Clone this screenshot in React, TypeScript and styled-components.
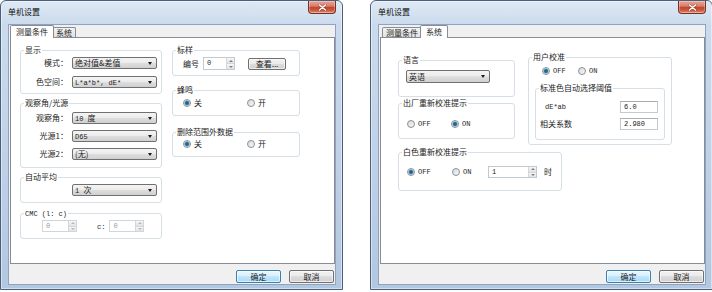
import React from 'react';
import styled, { createGlobalStyle } from 'styled-components';

const GlobalStyle = createGlobalStyle`
  html, body {
    margin: 0;
    padding: 0;
    background: #fff;
  }
  body {
    width: 712px;
    height: 292px;
    overflow: hidden;
    font-family: "Noto Sans CJK SC", "Liberation Sans", sans-serif;
    font-size: 8px;
    color: #1c1c1c;
  }
`;

const Desktop = styled.div`
  display: flex;
  gap: 27px;
  width: 712px;
  height: 292px;
  overflow: hidden;
`;

const Window = styled.div`
  flex: 0 0 343px;
  height: 290px;
  box-sizing: border-box;
  display: flex;
  flex-direction: column;
  padding: 0 6px 4px 7px;
  border: 1px solid #4a5f7c;
  border-radius: 6px 6px 0 0;
  background: linear-gradient(180deg, #dfe9f5 0%, #cbdbed 8%, #bfd1e7 55%, #b2c7e0 100%);
  box-shadow: inset 0 0 0 1px rgba(255, 255, 255, 0.45);
`;

const TitleBar = styled.div`
  flex-shrink: 0;
  height: 23px;
  display: flex;
  justify-content: space-between;
  align-items: flex-start;
`;

const Title = styled.span`
  margin-top: 6px;
  line-height: 10px;
  color: #101010;
`;

const CloseButton = styled.div`
  width: 28px;
  height: 13px;
  box-sizing: border-box;
  display: flex;
  align-items: center;
  justify-content: center;
  border: 1px solid #7a2f25;
  border-top: none;
  border-radius: 0 0 4px 4px;
  background: linear-gradient(180deg, #e8a596 0%, #d97f6b 42%, #c4432b 55%, #cc6244 82%, #e29679 100%);
  box-shadow: inset 0 0 0 1px rgba(255, 255, 255, 0.3);
`;

const Client = styled.div`
  flex: 1;
  display: flex;
  flex-direction: column;
  background: #f0f0f0;
  border: 1px solid #8ea3bf;
  padding-left: 1px;
`;

const TabStrip = styled.div`
  flex-shrink: 0;
  height: 12px;
  display: flex;
  align-items: flex-end;
  padding-left: 2px;
  position: relative;
  z-index: 1;
`;

const Tab = styled.div<{ $active?: boolean }>`
  box-sizing: border-box;
  position: relative;
  z-index: ${(p) => (p.$active ? 2 : 1)};
  height: ${(p) => (p.$active ? 13 : 10)}px;
  margin: 0 ${(p) => (p.$active ? -2 : 0)}px ${(p) => (p.$active ? -1 : 0)}px;
  padding: 0 ${(p) => (p.$active ? 5 : 3)}px;
  border: 1px solid #898c95;
  border-bottom: none;
  border-radius: 2px 2px 0 0;
  background: ${(p) => (p.$active ? '#fff' : 'linear-gradient(180deg, #f3f3f3, #e2e2e2)')};
  line-height: ${(p) => (p.$active ? 11 : 9)}px;
  white-space: nowrap;
`;

const Panel = styled.div<{ $pad: string }>`
  flex: 1;
  box-sizing: border-box;
  background: #fff;
  border: 1px solid #898c95;
  padding: ${(p) => p.$pad};
`;

const ButtonRow = styled.div`
  flex-shrink: 0;
  height: 20px;
  box-sizing: border-box;
  display: flex;
  justify-content: flex-end;
  align-items: flex-start;
  gap: 8px;
  padding: 6px 1px 0 0;
`;

const PushButton = styled.button<{ $primary?: boolean; $w: number; $h?: number }>`
  box-sizing: border-box;
  width: ${(p) => p.$w}px;
  height: ${(p) => p.$h ?? 13}px;
  padding: 0;
  border: 1px solid ${(p) => (p.$primary ? '#3c7fb1' : '#707070')};
  border-radius: 2px;
  background: ${(p) =>
    p.$primary
      ? 'linear-gradient(180deg, #eaf6fd 0%, #d9f0fc 45%, #bee6fd 50%, #a7d9f5 100%)'
      : 'linear-gradient(180deg, #f2f2f2 0%, #ebebeb 45%, #dddddd 50%, #cfcfcf 100%)'};
  box-shadow: inset 0 0 0 1px rgba(255, 255, 255, 0.6);
  font-family: inherit;
  font-size: 8px;
  line-height: 10px;
  color: #1c1c1c;
`;

const ViewButton = styled(PushButton)`
  margin-left: 13px;
`;

const Columns = styled.div<{ $gap: number }>`
  display: flex;
  align-items: flex-start;
  gap: ${(p) => p.$gap}px;
`;

const Column = styled.div<{ $w: number }>`
  width: ${(p) => p.$w}px;
  display: flex;
  flex-direction: column;
`;

const GroupBox = styled.fieldset<{ $w?: number; $mt?: number }>`
  box-sizing: border-box;
  min-width: 0;
  width: ${(p) => (p.$w ? `${p.$w}px` : 'auto')};
  margin: ${(p) => p.$mt ?? 0}px 0 0;
  padding: 0;
  border: 1px solid #d5dfe5;
  border-radius: 3px;
`;

const Legend = styled.legend`
  height: 10px;
  margin-left: 3px;
  padding: 0 1px;
  line-height: 10px;
  white-space: nowrap;
`;

const Latin = styled.span`
  font-family: "Liberation Mono", "DejaVu Sans Mono", monospace;
  font-size: 7px;
  white-space: pre;
`;

const FieldGrid = styled.div<{ $cols: string; $gap: number; $pad: string }>`
  display: grid;
  grid-template-columns: ${(p) => p.$cols};
  column-gap: 4px;
  row-gap: ${(p) => p.$gap}px;
  align-items: center;
  padding: ${(p) => p.$pad};
`;

const FieldLabel = styled.span<{ $left?: boolean; $indent?: number }>`
  text-align: ${(p) => (p.$left ? 'left' : 'right')};
  padding-left: ${(p) => p.$indent ?? 0}px;
  line-height: 12px;
  white-space: nowrap;
`;

const Row = styled.div<{ $pad: string; $h?: number }>`
  display: flex;
  align-items: center;
  height: ${(p) => p.$h ?? 10}px;
  padding: ${(p) => p.$pad};
`;

const ComboBox = styled.div<{ $w?: number; $h?: number }>`
  box-sizing: border-box;
  width: ${(p) => (p.$w ? `${p.$w}px` : 'auto')};
  height: ${(p) => p.$h ?? 12}px;
  display: flex;
  align-items: center;
  padding: 0 4px 0 2px;
  border: 1px solid #707070;
  border-radius: 2px;
  background: linear-gradient(180deg, #f4f4f4 0%, #ececec 45%, #dedede 52%, #d0d0d0 100%);
  line-height: 10px;
  white-space: nowrap;
`;

const ComboArrow = styled.span`
  margin-left: auto;
  width: 0;
  height: 0;
  border-left: 2.5px solid transparent;
  border-right: 2.5px solid transparent;
  border-top: 3px solid #1a1a1a;
`;

const RadioItem = styled.span<{ $w: number }>`
  flex-shrink: 0;
  width: ${(p) => p.$w}px;
  display: flex;
  align-items: center;
  gap: 3px;
  line-height: 10px;
`;

const RadioDot = styled.span<{ $on?: boolean }>`
  box-sizing: border-box;
  width: 8px;
  height: 8px;
  border-radius: 50%;
  border: 1px solid #8c8f93;
  background: ${(p) =>
    p.$on
      ? 'radial-gradient(circle, #1f5476 0, #2f77a3 1.6px, #7fb4d4 2.4px, #e4ecf2 2.8px, #f7f7f7 100%)'
      : 'linear-gradient(135deg, #d9d9d9, #f8f8f8)'};
`;

const SpinBox = styled.div<{ $w: number; $h?: number; $disabled?: boolean }>`
  box-sizing: border-box;
  flex-shrink: 0;
  width: ${(p) => p.$w}px;
  height: ${(p) => p.$h ?? 12}px;
  display: flex;
  border: 1px solid ${(p) => (p.$disabled ? '#d2d6db' : '#c3c9d1')};
  background: #fff;
`;

const SpinValue = styled.span<{ $disabled?: boolean }>`
  flex: 1;
  padding-left: 3px;
  font-family: "Liberation Mono", "DejaVu Sans Mono", monospace;
  font-size: 7px;
  line-height: 10px;
  color: ${(p) => (p.$disabled ? '#9a9a9a' : '#1c1c1c')};
`;

const SpinButtons = styled.div`
  width: 7px;
  display: flex;
  flex-direction: column;
  border-left: 1px solid #d3d7dc;
`;

const SpinButton = styled.span<{ $down?: boolean; $disabled?: boolean }>`
  flex: 1;
  display: flex;
  align-items: center;
  justify-content: center;
  background: linear-gradient(180deg, #f7f7f7, #e3e3e3);
  & + & {
    border-top: 1px solid #d3d7dc;
  }
  &::after {
    content: '';
    border-left: 2px solid transparent;
    border-right: 2px solid transparent;
    ${(p) => (p.$down ? 'border-top' : 'border-bottom')}: 2px solid ${(p) => (p.$disabled ? '#b8b8b8' : '#808080')};
  }
`;

const TextBox = styled.div`
  box-sizing: border-box;
  width: 38px;
  height: 12px;
  padding-left: 3px;
  border: 1px solid #c3c9d1;
  border-top-color: #abadb3;
  background: #fff;
  font-family: "Liberation Mono", "DejaVu Sans Mono", monospace;
  font-size: 7px;
  line-height: 10px;
`;

const Caption = styled.span<{ $ml?: number }>`
  flex-shrink: 0;
  margin-left: ${(p) => p.$ml ?? 0}px;
  line-height: 10px;
  white-space: nowrap;
`;

const NestedArea = styled.div`
  padding: 7px 6px 4px;
`;

const TopSection = styled.div`
  display: flex;
  align-items: flex-start;
  gap: 13px;
`;

function CloseIcon() {
  return (
    <svg width="9" height="7" viewBox="0 0 9 7">
      <path d="M1.5 1 L7.5 6 M7.5 1 L1.5 6" stroke="#3a1410" strokeWidth="2.6" strokeLinecap="round" opacity="0.35" />
      <path d="M1.5 1 L7.5 6 M7.5 1 L1.5 6" stroke="#fff" strokeWidth="1.5" strokeLinecap="round" />
    </svg>
  );
}

interface IComboProps {
  children: React.ReactNode;
  w?: number;
  h?: number;
}

function Combo({ children, w, h }: IComboProps) {
  return (
    <ComboBox $w={w} $h={h}>
      <span>{children}</span>
      <ComboArrow />
    </ComboBox>
  );
}

interface IRadioProps {
  children: React.ReactNode;
  w: number;
  on?: boolean;
}

function Radio({ children, w, on }: IRadioProps) {
  return (
    <RadioItem $w={w}>
      <RadioDot $on={on} />
      {children}
    </RadioItem>
  );
}

interface ISpinProps {
  value: string;
  w: number;
  h?: number;
  disabled?: boolean;
}

function Spin({ value, w, h, disabled }: ISpinProps) {
  return (
    <SpinBox $w={w} $h={h} $disabled={disabled}>
      <SpinValue $disabled={disabled}>{value}</SpinValue>
      <SpinButtons>
        <SpinButton $disabled={disabled} />
        <SpinButton $down $disabled={disabled} />
      </SpinButtons>
    </SpinBox>
  );
}

interface IDialogProps {
  active: number;
  children: React.ReactNode;
}

function Dialog({ active, children }: IDialogProps) {
  return (
    <Window>
      <TitleBar>
        <Title>单机设置</Title>
        <CloseButton>
          <CloseIcon />
        </CloseButton>
      </TitleBar>
      <Client>
        <TabStrip>
          {['测量条件', '系统'].map((t, i) => (
            <Tab key={t} $active={i === active}>
              {t}
            </Tab>
          ))}
        </TabStrip>
        {children}
        <ButtonRow>
          <PushButton $primary $w={45}>
            确定
          </PushButton>
          <PushButton $w={45}>取消</PushButton>
        </ButtonRow>
      </Client>
    </Window>
  );
}

function MeasurePage() {
  return (
    <Panel $pad="7px 0 0 9px">
      <Columns $gap={10}>
        <Column $w={142}>
          <GroupBox>
            <Legend>显示</Legend>
            <FieldGrid $cols="44px 85px" $gap={7} $pad="2px 0 5px 3px">
              <FieldLabel>模式：</FieldLabel>
              <Combo>绝对值&amp;差值</Combo>
              <FieldLabel>色空间：</FieldLabel>
              <Combo>
                <Latin>L*a*b*, dE*</Latin>
              </Combo>
            </FieldGrid>
          </GroupBox>
          <GroupBox $mt={4}>
            <Legend>观察角/光源</Legend>
            <FieldGrid $cols="44px 85px" $gap={6} $pad="4px 0 7px 3px">
              <FieldLabel>观察角：</FieldLabel>
              <Combo>
                <Latin>{'10 '}</Latin>度
              </Combo>
              <FieldLabel>光源1：</FieldLabel>
              <Combo>
                <Latin>D65</Latin>
              </Combo>
              <FieldLabel>光源2：</FieldLabel>
              <Combo>(无)</Combo>
            </FieldGrid>
          </GroupBox>
          <GroupBox $mt={4}>
            <Legend>自动平均</Legend>
            <FieldGrid $cols="44px 85px" $gap={0} $pad="2px 0 6px 3px">
              <FieldLabel />
              <Combo>
                <Latin>{'1 '}</Latin>次
              </Combo>
            </FieldGrid>
          </GroupBox>
          <GroupBox $mt={5}>
            <Legend>
              <Latin>CMC (l: c)</Latin>
            </Legend>
            <Row $h={12} $pad="2px 0 6px 21px">
              <Spin value="0" w={35} disabled />
              <Caption $ml={20}>
                <Latin>c:</Latin>
              </Caption>
              <Caption $ml={4}>
                <Spin value="0" w={35} disabled />
              </Caption>
            </Row>
          </GroupBox>
        </Column>
        <Column $w={128}>
          <GroupBox>
            <Legend>标样</Legend>
            <Row $h={13} $pad="2px 0 5px 10px">
              <Caption>编号</Caption>
              <Caption $ml={4}>
                <Spin value="0" w={32} h={13} />
              </Caption>
              <ViewButton $w={38} $h={12}>
                查看...
              </ViewButton>
            </Row>
          </GroupBox>
          <GroupBox $mt={9}>
            <Legend>蜂鸣</Legend>
            <Row $pad="3px 0 7px 10px">
              <Radio w={64} on>
                关
              </Radio>
              <Radio w={40}>开</Radio>
            </Row>
          </GroupBox>
          <GroupBox $mt={11}>
            <Legend>删除范围外数据</Legend>
            <Row $pad="2px 0 7px 10px">
              <Radio w={64} on>
                关
              </Radio>
              <Radio w={40}>开</Radio>
            </Row>
          </GroupBox>
        </Column>
      </Columns>
    </Panel>
  );
}

function SystemPage() {
  return (
    <Panel $pad="14px 0 0 17px">
      <TopSection>
        <Column $w={117}>
          <GroupBox $mt={3}>
            <Legend>语言</Legend>
            <Row $h={13} $pad="5px 0 13px 7px">
              <Combo w={84} h={13}>
                英语
              </Combo>
            </Row>
          </GroupBox>
          <GroupBox $mt={1}>
            <Legend>出厂重新校准提示</Legend>
            <Row $pad="11px 0 9px 8px">
              <Radio w={44}>
                <Latin>OFF</Latin>
              </Radio>
              <Radio w={44} on>
                <Latin>ON</Latin>
              </Radio>
            </Row>
          </GroupBox>
        </Column>
        <GroupBox $w={144}>
          <Legend>用户校准</Legend>
          <Row $pad="4px 0 0 13px">
            <Radio w={36} on>
              <Latin>OFF</Latin>
            </Radio>
            <Radio w={36}>
              <Latin>ON</Latin>
            </Radio>
          </Row>
          <NestedArea>
            <GroupBox>
              <Legend>标准色自动选择阈值</Legend>
              <FieldGrid $cols="76px 38px" $gap={5} $pad="7px 0 9px 4px">
                <FieldLabel $left $indent={5}>
                  <Latin>dE*ab</Latin>
                </FieldLabel>
                <TextBox>6.0</TextBox>
                <FieldLabel $left>相关系数</FieldLabel>
                <TextBox>2.980</TextBox>
              </FieldGrid>
            </GroupBox>
          </NestedArea>
        </GroupBox>
      </TopSection>
      <GroupBox $w={164} $mt={2}>
        <Legend>白色重新校准提示</Legend>
        <Row $h={12} $pad="9px 0 12px 8px">
          <Radio w={45} on>
            <Latin>OFF</Latin>
          </Radio>
          <Radio w={36}>
            <Latin>ON</Latin>
          </Radio>
          <Spin value="1" w={49} />
          <Caption $ml={7}>时</Caption>
        </Row>
      </GroupBox>
    </Panel>
  );
}

function App() {
  return (
    <>
      <GlobalStyle />
      <Desktop>
        <Dialog active={0}>
          <MeasurePage />
        </Dialog>
        <Dialog active={1}>
          <SystemPage />
        </Dialog>
      </Desktop>
    </>
  );
}

export default App;
